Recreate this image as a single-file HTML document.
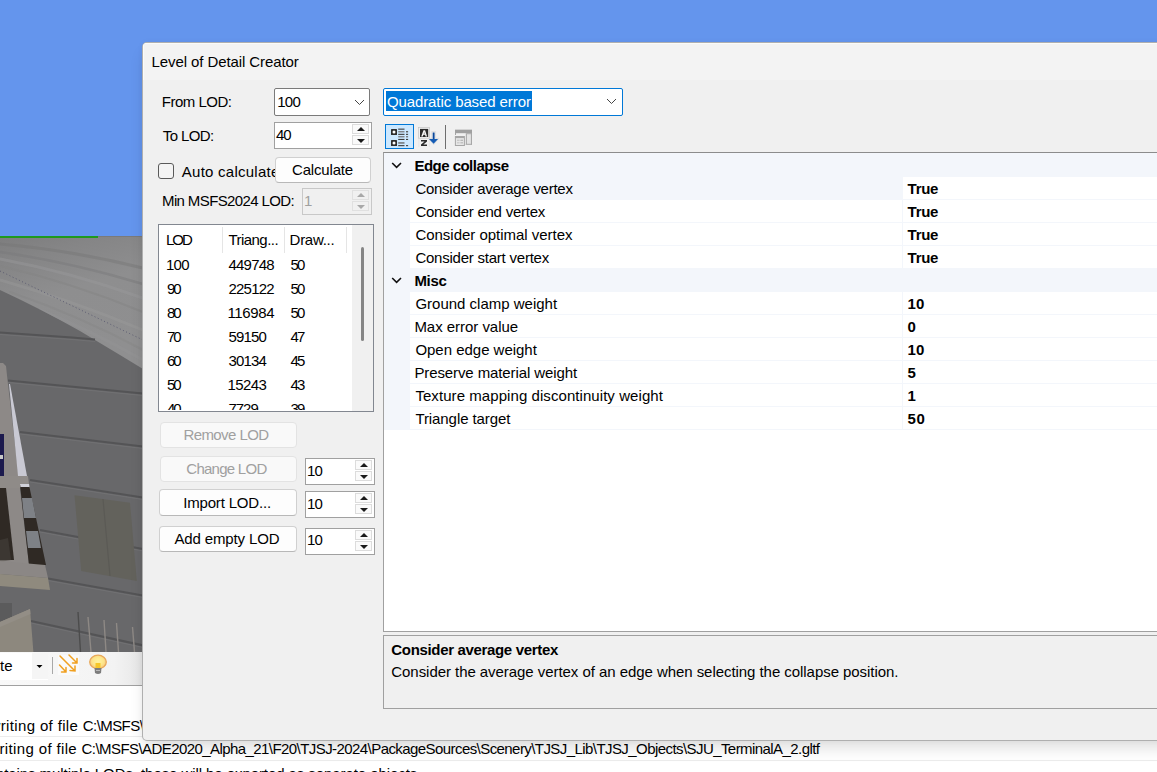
<!DOCTYPE html>
<html><head><meta charset="utf-8">
<style>
*{margin:0;padding:0;box-sizing:border-box}
html,body{width:1157px;height:772px;overflow:hidden;background:#6495ED;font-family:"Liberation Sans",sans-serif;font-size:15px;color:#000;position:relative}
.a{position:absolute}
.t{position:absolute;white-space:pre;line-height:15px}
.b{font-weight:bold}
.btn{position:absolute;background:#fdfdfd;border:1px solid #d0d0d0;border-bottom-color:#b8b8b8;border-radius:4px}
.btn.dis{background:#f9f9f9;border-color:#e3e3e3}
.spin{position:absolute;background:#fff;border:1px solid #a0a0a0}
.sb{position:absolute;width:17px;height:10px;border:1px solid #dcdcdc;background:#fafafa}
.up,.dn{position:absolute;left:3.5px;width:0;height:0;border-left:4px solid transparent;border-right:4px solid transparent}
.up{top:2px;border-bottom:4.5px solid #1a1a1a}
.dn{top:2.5px;border-top:4.5px solid #1a1a1a}
.row{position:absolute;left:410px;width:747px;height:22px;background:#fff}
.val{position:absolute;left:903px;width:254px;height:22px;background:#fff}
</style></head><body>

<!-- 3D scene -->
<svg class="a" style="left:0;top:0" width="143" height="686" viewBox="0 0 143 686">
  <defs>
    <linearGradient id="roofg" x1="0" y1="0" x2="0.3" y2="1">
      <stop offset="0" stop-color="#7d7d7e"/>
      <stop offset="0.2" stop-color="#858586"/>
      <stop offset="0.5" stop-color="#8e8e8f"/>
      <stop offset="1" stop-color="#8f8f90"/>
    </linearGradient>
    <linearGradient id="tbg" x1="0" y1="0" x2="1" y2="0">
      <stop offset="0" stop-color="#f9f9f9"/>
      <stop offset="0.8" stop-color="#f3f3f3"/>
      <stop offset="1" stop-color="#e6e6e6"/>
    </linearGradient>
  </defs>
  <rect x="0" y="236" width="143" height="416" fill="#68686a"/>
  <polygon points="0,236 143,236 143,369 120,355 100,343 80,331 60,320 40,309.5 20,299.5 0,290" fill="url(#roofg)"/>
  <clipPath id="roofc"><polygon points="0,236 143,236 143,369 120,355 100,343 80,331 60,320 40,309.5 20,299.5 0,290"/></clipPath>
  <g fill="none" stroke-linecap="round" clip-path="url(#roofc)">
    <path d="M0,244 Q70,250 143,268" stroke="#757576" stroke-width="3" opacity="0.45"/>
    <path d="M0,252 Q70,262 143,284" stroke="#7a7a7b" stroke-width="2.5" opacity="0.5"/>
    <path d="M0,259 Q70,272 143,298" stroke="#9a9a9b" stroke-width="3" opacity="0.45"/>
    <path d="M0,266 Q70,282 143,312" stroke="#838384" stroke-width="2" opacity="0.5"/>
    <path d="M0,280 Q70,300 143,330" stroke="#9b9b9c" stroke-width="3" opacity="0.4"/>
    <path d="M10,292 Q80,316 143,350" stroke="#848485" stroke-width="2" opacity="0.4"/>
    <path d="M40,310 Q90,330 143,360" stroke="#969697" stroke-width="3" opacity="0.35"/>
  </g>
  <line x1="0" y1="271" x2="143" y2="340" stroke="#50506a" stroke-width="0.8" stroke-dasharray="1 2.5"/>
  <rect x="0" y="236" width="98" height="2" fill="#1e9a1e"/>
  <rect x="98" y="236" width="45" height="1" fill="#7a7a7a"/>
  <g stroke="#717173" stroke-width="1" fill="none" transform="translate(0,2)">
    <path d="M0,332.5 L72,337.5 L95,339.5"/>
    <path d="M8,380.5 L143,393.5"/>
    <path d="M20,432 L143,446.5"/>
    <path d="M30,480 L143,497.5"/>
    <path d="M40,530 L143,549"/>
    <path d="M48,578.5 L143,595.5"/>
    <path d="M31,621 L143,645.5"/>
  </g>
  <g stroke="#545456" stroke-width="2.2" fill="none">
    <path d="M0,332.5 L72,337.5 L95,339.5"/>
    <path d="M8,380.5 L143,393.5"/>
    <path d="M20,432 L143,446.5"/>
    <path d="M30,480 L143,497.5"/>
    <path d="M40,530 L143,549"/>
    <path d="M48,578.5 L143,595.5"/>
    <path d="M31,621 L143,645.5"/>
  </g>
  <!-- window frame -->
  <polygon points="0,363 3,363 6,366 7.5,380 19,480 29,565 0,565" fill="#8d8987"/>
  <polygon points="9,384 10,384 27,476 18,476" fill="#c9c9d3"/>
  <rect x="0" y="434" width="4" height="44" fill="#1c1a4e"/>
  <rect x="0" y="455" width="3" height="4" fill="#c8c8c8"/>
  <polygon points="0,476 28,476 29.5,488 0,488" fill="#8f8b88"/>
  <polygon points="0,488 6,488 14,560 0,560" fill="#2f2924"/>
  <polygon points="20,485 29,485 46,565 29,565" fill="#2f2924"/>
  <polygon points="20,484 29,484 29.5,487 20.5,487" fill="#d0d0d8"/>
  <polygon points="22,498 32,498 36,518 24,518" fill="#7e8186"/>
  <polygon points="26,531 38,531 41,548 28,548" fill="#7e8186"/>
  <polygon points="0,540 8,538 11,560 0,562" fill="#4a4540" opacity="0.5"/>
  <polygon points="0,561 45,565 48,578 0,574" fill="#8b8785"/>
  <polygon points="0,574 48,578 50,590 0,586" fill="#8f8a7e"/>
  <!-- door panel -->
  <polygon points="74.5,495.3 130,502.8 136.8,581 81.2,571" fill="#63625c"/>
  <line x1="103" y1="499" x2="110" y2="576" stroke="#5b5a55" stroke-width="1.2"/>
  <!-- box -->
  <polygon points="0,603 12,603 12,617 0,622" fill="#5b5b5c"/>
  <polygon points="0,622 30,609 33.4,652 0,652" fill="#8d887e"/>
  <polygon points="0,622 30,609 30.5,614 0,627" fill="#938e86"/>
  <g stroke-width="1.4">
    <line x1="78" y1="612" x2="80.5" y2="652" stroke="#4c4c4c"/>
    <line x1="88" y1="617" x2="91" y2="652" stroke="#8e8985"/>
    <line x1="104" y1="620" x2="106" y2="652" stroke="#8e8985"/>
    <line x1="116.5" y1="623" x2="118.5" y2="652" stroke="#8e8985"/>
    <line x1="132.5" y1="627" x2="134.5" y2="652" stroke="#8e8985"/>
  </g>
  <!-- toolbar -->
  <rect x="0" y="652" width="143" height="33" fill="url(#tbg)"/>
  <rect x="0" y="685" width="143" height="1" fill="#a0a0a0"/>
  <rect x="0" y="653" width="48" height="27" fill="#fff"/>
  <rect x="32" y="653" width="16" height="26" fill="#f5f5f5"/>
  <polygon points="36.5,665 42.5,665 39.5,668" fill="#000"/>
  <rect x="52" y="657" width="1" height="17" fill="#a8a8a8"/>
  <rect x="58" y="655" width="21" height="20" fill="#fafafa"/>
  <g stroke="#f0a020" stroke-width="1.5" fill="none" stroke-linecap="round">
    <path d="M60,656 L75,671 M70,670.5 L75,671 L75,666"/>
    <path d="M69,655 L77,663 M72.5,663 L77,663 L77,658.5"/>
    <path d="M59.5,665 L66,672 M61.5,672 L66,672 L66,667.5"/>
  </g>
  <radialGradient id="bulbg" cx="0.5" cy="0.45" r="0.55"><stop offset="0" stop-color="#fff3a0"/><stop offset="0.6" stop-color="#fde58a"/><stop offset="1" stop-color="#f5c880"/></radialGradient>
  <ellipse cx="98" cy="662" rx="8.3" ry="6.8" fill="url(#bulbg)" stroke="#e9a858" stroke-width="1.3"/>
  <rect x="95.5" y="663" width="5" height="5" fill="#f6c628"/>
  <path d="M94.5,668 L101.5,668 L101,673 Q98,675 95,673 Z" fill="#7c7c7c"/>
  <rect x="96" y="670" width="4" height="1" fill="#b8b8b8"/>
</svg>
<div class="t" style="left:0px;top:658px">te</div>

<!-- log -->
<div class="a" style="left:0;top:686px;width:1157px;height:86px;background:#fff"></div>
<div class="a" style="left:0;top:736px;width:1157px;height:1px;background:#ececec"></div>
<div class="a" style="left:0;top:760px;width:1157px;height:1px;background:#ececec"></div>
<div class="t" style="left:-10.5px;top:717.5px;letter-spacing:0.36px">writing of file </div><div class="t" style="left:82.8px;top:717.5px;letter-spacing:-0.570px">C:\MSFS\ADE2020_Alpha_21\F20\TJSJ-2024\PackageSources\Scenery\TJSJ_Lib\TJSJ_Objects\SJU_TerminalA_2.gltf</div>
<div class="t" style="left:-11.7px;top:741.3px;letter-spacing:0.36px">writing of file </div><div class="t" style="left:81.6px;top:741.3px;letter-spacing:-0.570px">C:\MSFS\ADE2020_Alpha_21\F20\TJSJ-2024\PackageSources\Scenery\TJSJ_Lib\TJSJ_Objects\SJU_TerminalA_2.gltf</div>
<div class="t" style="left:-19.8px;top:766px;letter-spacing:-0.074px">contains </div><div class="t" style="left:39.6px;top:766px;letter-spacing:-0.074px">multiple LODs, these will be exported as separate objects</div>

<!-- Dialog -->
<div class="a" style="left:142px;top:42px;width:1040px;height:699px;background:#f0f0f0;border-radius:5px;overflow:hidden;border:1px solid rgba(0,0,0,0.27);box-shadow:0 10px 16px -3px rgba(0,0,0,0.13),0 0 6px rgba(0,0,0,0.04)">
  <div class="a" style="left:0;top:0;width:1040px;height:37px;background:#f3f3f3;box-shadow:inset 1px 1px 0 #fbfbf8"></div>
</div>

<!-- left controls -->
<div class="a" style="left:274px;top:88px;width:96px;height:28px;background:#fff;border:1px solid #7a7a7a;border-radius:2px"></div>
<svg class="a" style="left:354px;top:99px" width="12" height="7"><polyline points="1,1 5.5,5.5 10,1" stroke="#444" stroke-width="1" fill="none"/></svg>
<div class="spin" style="left:274px;top:122px;width:98px;height:27px"></div>
<div class="sb" style="left:352px;top:124px"><div class="up"></div></div>
<div class="sb" style="left:352px;top:135px"><div class="dn"></div></div>

<div class="a" style="left:158px;top:163px;width:16px;height:16px;border:1px solid #5a5a5a;border-radius:3px;background:#f4f4f4"></div>
<div class="a" style="left:180px;top:160px;width:95px;height:22px;overflow:hidden"><div class="t" style="left:1.8px;top:4px;letter-spacing:0.25px">Auto calculate</div></div>
<div class="btn" style="left:275px;top:157px;width:96px;height:26px"></div>

<div class="a" style="left:302px;top:188px;width:70px;height:27px;border:1px solid #c8c8c8;background:#f0f0f0"></div>
<div class="sb" style="left:352px;top:190px;background:#f0f0f0;border-color:#e0e0e0"><div class="up" style="border-bottom-color:#a8a8a8"></div></div>
<div class="sb" style="left:352px;top:201px;background:#f0f0f0;border-color:#e0e0e0"><div class="dn" style="border-top-color:#a8a8a8"></div></div>

<!-- list -->
<div class="a" style="left:158px;top:224px;width:216px;height:188px;background:#fff;border:1px solid #828790;overflow:hidden">
  <div class="a" style="left:63px;top:2px;width:1px;height:26px;background:#e5e5e5"></div>
  <div class="a" style="left:125px;top:2px;width:1px;height:26px;background:#e5e5e5"></div>
  <div class="a" style="left:187px;top:2px;width:1px;height:26px;background:#e5e5e5"></div>
  <div class="a" style="left:193px;top:0;width:21px;height:186px;background:#f0f0f0"></div>
  <div class="a" style="left:202px;top:22px;width:3px;height:94px;background:#858585;border-radius:2px"></div>
</div>
<div class="a" style="left:159px;top:225px;width:193px;height:185px;overflow:hidden">
<div class="t" style="left:7.0px;top:7.0px;letter-spacing:-2.005px">LOD</div>
<div class="t" style="left:69.4px;top:7.0px;letter-spacing:-0.537px">Triang...</div>
<div class="t" style="left:130.6px;top:7.0px;letter-spacing:-0.285px">Draw...</div>
<div class="t" style="left:7.0px;top:32.0px;letter-spacing:-0.742px">100</div>
<div class="t" style="left:69.4px;top:32.0px;letter-spacing:-0.762px">449748</div>
<div class="t" style="left:131.6px;top:32.0px;letter-spacing:-2.042px">50</div>
<div class="t" style="left:8.0px;top:56.0px;letter-spacing:-2.042px">90</div>
<div class="t" style="left:69.4px;top:56.0px;letter-spacing:-0.762px">225122</div>
<div class="t" style="left:131.6px;top:56.0px;letter-spacing:-2.042px">50</div>
<div class="t" style="left:8.0px;top:80.0px;letter-spacing:-2.042px">80</div>
<div class="t" style="left:68.4px;top:80.0px;letter-spacing:-0.340px">116984</div>
<div class="t" style="left:131.6px;top:80.0px;letter-spacing:-2.042px">50</div>
<div class="t" style="left:8.0px;top:104.0px;letter-spacing:-2.042px">70</div>
<div class="t" style="left:69.4px;top:104.0px;letter-spacing:-0.842px">59150</div>
<div class="t" style="left:131.6px;top:104.0px;letter-spacing:-2.042px">47</div>
<div class="t" style="left:8.0px;top:128.0px;letter-spacing:-2.042px">60</div>
<div class="t" style="left:69.4px;top:128.0px;letter-spacing:-0.842px">30134</div>
<div class="t" style="left:131.6px;top:128.0px;letter-spacing:-2.042px">45</div>
<div class="t" style="left:8.0px;top:152.0px;letter-spacing:-2.042px">50</div>
<div class="t" style="left:68.4px;top:152.0px;letter-spacing:-0.592px">15243</div>
<div class="t" style="left:131.6px;top:152.0px;letter-spacing:-2.042px">43</div>
<div class="t" style="left:8.0px;top:176.0px;letter-spacing:-2.042px">40</div>
<div class="t" style="left:69.4px;top:176.0px;letter-spacing:-0.976px">7729</div>
<div class="t" style="left:131.6px;top:176.0px;letter-spacing:-2.042px">39</div>
</div>

<!-- buttons -->
<div class="btn dis" style="left:160px;top:422px;width:137px;height:26px"></div>
<div class="btn dis" style="left:160px;top:456px;width:137px;height:26px"></div>
<div class="btn" style="left:159px;top:489px;width:138px;height:27px"></div>
<div class="btn" style="left:159px;top:526px;width:138px;height:26px"></div>

<div class="spin" style="left:305px;top:458px;width:70px;height:27px"></div>
<div class="sb" style="left:355px;top:460px"><div class="up"></div></div>
<div class="sb" style="left:355px;top:471px"><div class="dn"></div></div>
<div class="spin" style="left:305px;top:491px;width:70px;height:27px"></div>
<div class="sb" style="left:355px;top:493px"><div class="up"></div></div>
<div class="sb" style="left:355px;top:504px"><div class="dn"></div></div>
<div class="spin" style="left:305px;top:528px;width:70px;height:27px"></div>
<div class="sb" style="left:355px;top:530px"><div class="up"></div></div>
<div class="sb" style="left:355px;top:541px"><div class="dn"></div></div>

<!-- right: combo -->
<div class="a" style="left:383px;top:88px;width:240px;height:28px;background:#fff;border:1px solid #0078d7;border-radius:2px"></div>
<div class="a" style="left:386px;top:91px;width:146px;height:20px;background:#0078d7"></div>
<svg class="a" style="left:606px;top:98px" width="12" height="7"><polyline points="1,1 5.5,5.5 10,1" stroke="#444" stroke-width="1" fill="none"/></svg>

<!-- toolbar icons -->
<div class="a" style="left:385px;top:124px;width:29px;height:25px;background:#cce8ff;border:1px solid #0078d7"></div>
<svg class="a" style="left:384px;top:122px" width="32" height="28">
  <rect x="7" y="7" width="6" height="6" rx="0.6" fill="#2e2e2e"/><circle cx="10" cy="10" r="1.5" fill="#fff"/>
  <rect x="7" y="18" width="6" height="6" rx="0.6" fill="#2e2e2e"/><circle cx="10" cy="21" r="1.5" fill="#fff"/>
  <rect x="14.2" y="6.6" width="6.3" height="1.1" fill="#3e3e3e"/>
  <rect x="14.2" y="9.1" width="6.3" height="1.3" fill="#7a7c80"/>
  <rect x="14.2" y="11.8" width="6.3" height="1.1" fill="#3e3e3e"/>
  <rect x="14.2" y="14.1" width="6.3" height="1.3" fill="#7a7c80"/>
  <rect x="14.2" y="16.9" width="6.3" height="1.1" fill="#3e3e3e"/>
  <rect x="14.2" y="20.3" width="6.3" height="1.3" fill="#606060"/>
  <rect x="14.2" y="23.1" width="6.3" height="1.1" fill="#3e3e3e"/>
  <rect x="22" y="9.1" width="2.1" height="1.3" fill="#555"/>
  <rect x="22" y="11.8" width="2.1" height="1.1" fill="#3e3e3e"/>
  <rect x="22" y="14.1" width="2.1" height="1.3" fill="#777"/>
  <rect x="22" y="16.9" width="2.1" height="1.1" fill="#3e3e3e"/>
  <rect x="22" y="23.1" width="2.1" height="1.1" fill="#3e3e3e"/>
</svg>
<svg class="a" style="left:414px;top:122px" width="32" height="28">
  <rect x="4.6" y="5.4" width="11" height="10.8" fill="none" stroke="#c4c4c4" stroke-width="0.7"/>
  <rect x="6" y="6.9" width="8.2" height="8.1" fill="#2a2a2a"/>
  <path d="M7.2,14.4 L9.5,8.2 L11.1,8.2 L13.1,14.4 L11.6,14.4 L11.1,12.8 L9.4,12.8 L8.8,14.4 Z" fill="#f4f4f4"/>
  <path d="M9.8,11.7 L10.8,11.7 L10.3,10.1 Z" fill="#6a6a6a"/>
  <path d="M7,18.1 L13,18.1 L13,19.6 L9.4,22.5 L13,22.5 L13,24 L7,24 L7,22.5 L10.6,19.6 L7,19.6 Z" fill="#2a2a2a"/>
  <path d="M4.8,17.5 L4.8,25 M15.4,17.5 L15.4,25" stroke="#cfcfcf" stroke-width="0.6" stroke-dasharray="1 1"/>
  <path d="M17.8,9.6 L21.6,9.6 L21.6,16.4 L24.8,16.4 L19.7,22.6 L14.6,16.4 L17.8,16.4 Z" fill="#f6f6f6" stroke="#d0d0d0" stroke-width="0.6"/>
  <rect x="18.7" y="10.5" width="1.9" height="6.8" fill="#0a489a"/>
  <path d="M15,17 L24.1,17 L19.6,21.8 Z" fill="#155cb4"/>
</svg>
<div class="a" style="left:445px;top:125px;width:1px;height:24px;background:#6e6e6e"></div>
<svg class="a" style="left:446px;top:122px" width="32" height="28">
  <rect x="9" y="7.8" width="17" height="15" fill="#a4a4a4"/>
  <rect x="9" y="7.8" width="17" height="3.4" fill="#a0a0a0"/>
  <rect x="10" y="11.2" width="15" height="11.6" fill="#f0f0f0"/>
  <rect x="19.8" y="11.2" width="6.1" height="11.6" fill="#a8a8a8"/>
  <rect x="20.9" y="12.2" width="4" height="9.6" fill="#e4e4e4"/>
  <rect x="8" y="13" width="11" height="11" fill="#f0f0f0"/>
  <rect x="8.9" y="14" width="10" height="10" fill="#a6a6a6"/>
  <rect x="9.9" y="16.1" width="8" height="6.9" fill="#e6e6e6"/>
  <rect x="11" y="17.7" width="2.6" height="1.2" fill="#c4c4c4"/><rect x="14.4" y="17.7" width="2.6" height="1.2" fill="#b4b4b4"/>
  <rect x="11" y="20.2" width="2.6" height="1.2" fill="#c8c8c8"/><rect x="14.4" y="20.2" width="2.6" height="1.2" fill="#b8b8b8"/>
</svg>

<!-- property grid -->
<div class="a" style="left:383px;top:152px;width:800px;height:480px;background:#fff;border:1px solid #a0a0a0;border-top-color:#8c8c8c"></div>
<div class="a" style="left:384px;top:153px;width:773px;height:277px;background:#f3f6fb"></div>
<div class="row" style="top:200px"></div>
<div class="row" style="top:223px"></div>
<div class="row" style="top:246px"></div>
<div class="row" style="top:292px"></div>
<div class="row" style="top:315px"></div>
<div class="row" style="top:338px"></div>
<div class="row" style="top:361px"></div>
<div class="row" style="top:384px"></div>
<div class="row" style="top:407px"></div>
<div class="val" style="top:177px"></div>
<div class="a" style="left:902px;top:177px;width:1px;height:253px;background:#f3f6fb"></div>
<svg class="a" style="left:390px;top:161px" width="14" height="9"><polyline points="2.2,2 6.6,6.3 11,2" stroke="#111" stroke-width="1.6" fill="none"/></svg>
<svg class="a" style="left:390px;top:276px" width="14" height="9"><polyline points="2.2,2 6.6,6.3 11,2" stroke="#111" stroke-width="1.6" fill="none"/></svg>

<!-- help -->
<div class="a" style="left:383px;top:635px;width:800px;height:74px;background:#f0f0f0;border:1px solid #a0a0a0"></div>

<div class="t" style="left:151.6px;top:54.0px;letter-spacing:-0.093px">Level of Detail Creator</div>
<div class="t" style="left:161.8px;top:94.0px;letter-spacing:-0.501px">From LOD:</div>
<div class="t" style="left:162.8px;top:128.0px;letter-spacing:-0.592px">To LOD:</div>
<div class="t" style="left:292.0px;top:162.0px;letter-spacing:-0.174px">Calculate</div>
<div class="t" style="left:162.0px;top:193.0px;letter-spacing:-0.618px">Min MSFS2024 LOD:</div>
<div class="t" style="left:277.2px;top:94.0px;letter-spacing:-0.692px">100</div>
<div class="t" style="left:276.1px;top:127.0px;letter-spacing:-1.142px">40</div>
<div class="t" style="left:304.0px;top:193.0px;color:#a0a0a0">1</div>
<div class="t" style="left:183.4px;top:427.0px;letter-spacing:-0.570px;color:#a0a0a0">Remove LOD</div>
<div class="t" style="left:186.3px;top:461.0px;letter-spacing:-0.736px;color:#a0a0a0">Change LOD</div>
<div class="t" style="left:183.2px;top:495.0px;letter-spacing:-0.171px">Import LOD...</div>
<div class="t" style="left:174.5px;top:531.0px;letter-spacing:-0.140px">Add empty LOD</div>
<div class="t" style="left:307.0px;top:463.0px;letter-spacing:-0.842px">10</div>
<div class="t" style="left:307.0px;top:496.0px;letter-spacing:-0.842px">10</div>
<div class="t" style="left:307.0px;top:532.0px;letter-spacing:-0.842px">10</div>
<div class="t" style="left:386.9px;top:94.0px;letter-spacing:-0.096px;color:#fff">Quadratic based error</div>
<div class="t b" style="left:414.4px;top:158.0px;letter-spacing:-0.519px">Edge collapse</div>
<div class="t" style="left:415.4px;top:181.0px;letter-spacing:-0.269px">Consider average vertex</div>
<div class="t" style="left:415.4px;top:204.0px;letter-spacing:-0.241px">Consider end vertex</div>
<div class="t" style="left:415.4px;top:227.0px;letter-spacing:-0.021px">Consider optimal vertex</div>
<div class="t" style="left:415.4px;top:250.0px;letter-spacing:-0.229px">Consider start vertex</div>
<div class="t b" style="left:414.4px;top:273.0px;letter-spacing:-0.302px">Misc</div>
<div class="t" style="left:415.4px;top:296.0px">Ground clamp weight</div>
<div class="t" style="left:414.4px;top:319.0px;letter-spacing:-0.033px">Max error value</div>
<div class="t" style="left:415.4px;top:342.0px;letter-spacing:-0.019px">Open edge weight</div>
<div class="t" style="left:414.4px;top:365.0px;letter-spacing:-0.104px">Preserve material weight</div>
<div class="t" style="left:415.4px;top:388.0px;letter-spacing:0.067px">Texture mapping discontinuity weight</div>
<div class="t" style="left:415.4px;top:411.0px;letter-spacing:-0.078px">Triangle target</div>
<div class="t b" style="left:907.6px;top:181.0px;letter-spacing:-0.278px">True</div>
<div class="t b" style="left:907.6px;top:204.0px;letter-spacing:-0.278px">True</div>
<div class="t b" style="left:907.6px;top:227.0px;letter-spacing:-0.278px">True</div>
<div class="t b" style="left:907.6px;top:250.0px;letter-spacing:-0.278px">True</div>
<div class="t b" style="left:907.5px;top:296.0px;letter-spacing:0.058px">10</div>
<div class="t b" style="left:907.5px;top:319.0px">0</div>
<div class="t b" style="left:907.5px;top:342.0px;letter-spacing:0.058px">10</div>
<div class="t b" style="left:907.5px;top:365.0px">5</div>
<div class="t b" style="left:907.5px;top:388.0px">1</div>
<div class="t b" style="left:907.5px;top:411.0px;letter-spacing:0.758px">50</div>
<div class="t b" style="left:391.3px;top:642.0px;letter-spacing:-0.333px">Consider average vertex</div>
<div class="t" style="left:391.3px;top:664.0px;letter-spacing:-0.053px">Consider the average vertex of an edge when selecting the collapse position.</div>
</body></html>
